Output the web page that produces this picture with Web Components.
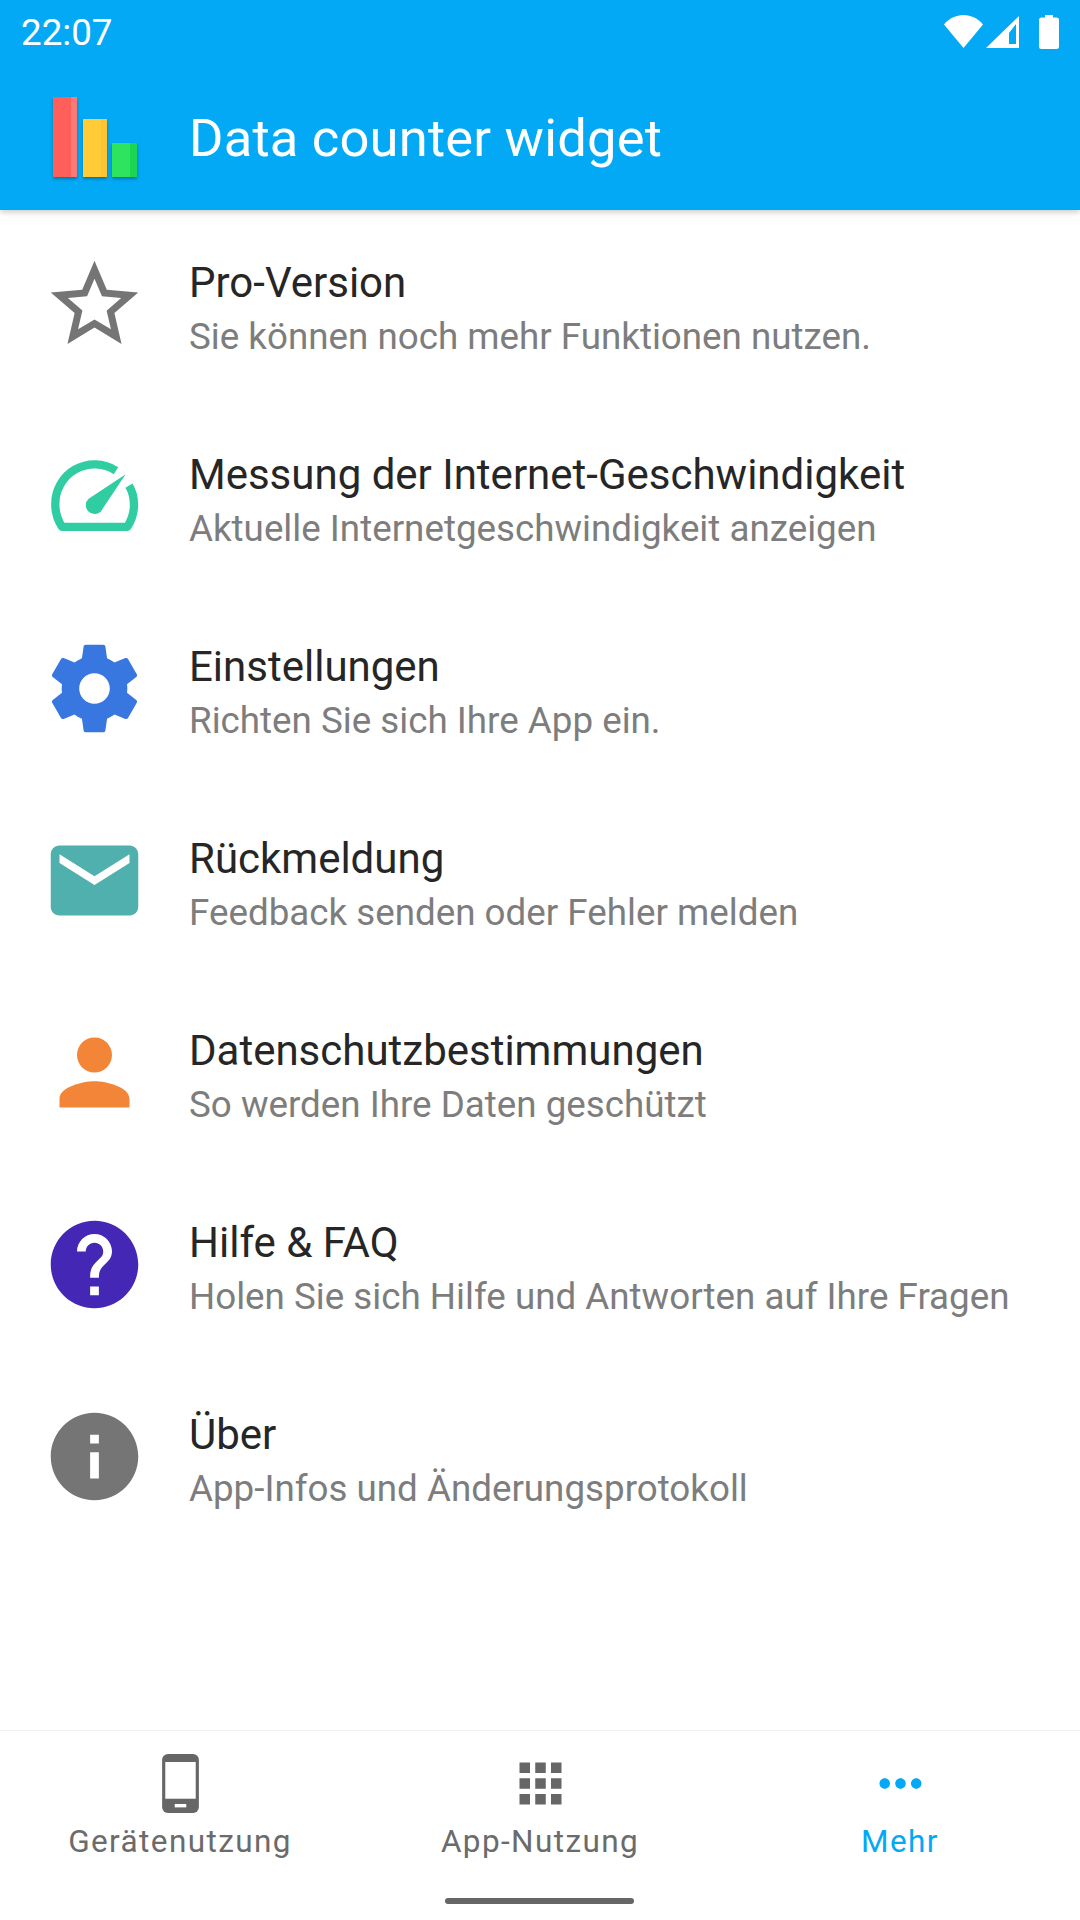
<!DOCTYPE html>
<html>
<head>
<meta charset="utf-8">
<style>
  html, body { margin: 0; padding: 0; background: #fff; }
  body { width: 1080px; height: 1920px; font-family: Roboto, sans-serif; display: flex; flex-direction: column; }
  app-list { flex: 1; }
</style>
</head>
<body>
<app-header title="Data counter widget" time="22:07"></app-header>
<app-list>
  <menu-row title="Pro-Version" text="Sie können noch mehr Funktionen nutzen.">
    <svg viewBox="0 0 24 24" fill="#757575"><path d="M22 9.24l-7.19-.62L12 2 9.19 8.63 2 9.24l5.46 4.73L5.82 21 12 17.27 18.18 21l-1.63-7.03L22 9.24zM12 15.4l-3.76 2.27 1-4.28-3.32-2.88 4.38-.38L12 6.1l1.71 4.04 4.38.38-3.32 2.88 1 4.28L12 15.4z"/></svg>
  </menu-row>
  <menu-row title="Messung der Internet-Geschwindigkeit" text="Aktuelle Internetgeschwindigkeit anzeigen">
    <svg viewBox="35 612 315 315"><path d="M257 692A118 118 0 0 0 75 795C75 818 82 840 95 860.500L291 860.500C304 840 311 818 311 795C311 773 306 754 296 737" fill="none" stroke="#30cda2" stroke-width="25" stroke-linejoin="round"/><path d="M286 703L175 776A25 25 0 0 0 211 815Z" fill="#30cda2"/></svg>
  </menu-row>
  <menu-row title="Einstellungen" text="Richten Sie sich Ihre App ein.">
    <svg viewBox="0 0 24 24" fill="#3876e0"><path d="M19.43 12.98c.04-.32.07-.64.07-.98s-.03-.66-.07-.98l2.11-1.65c.19-.15.24-.42.12-.64l-2-3.46c-.12-.22-.39-.3-.61-.22l-2.49 1c-.52-.4-1.08-.73-1.69-.98l-.38-2.65C14.46 2.18 14.25 2 14 2h-4c-.25 0-.46.18-.49.42l-.38 2.65c-.61.25-1.17.59-1.69.98l-2.49-1c-.23-.09-.49 0-.61.22l-2 3.46c-.13.22-.07.49.12.64l2.11 1.65c-.04.32-.07.65-.07.98s.03.66.07.98l-2.11 1.65c-.19.15-.24.42-.12.64l2 3.46c.12.22.39.3.61.22l2.49-1c.52.4 1.08.73 1.69.98l.38 2.65c.03.24.24.42.49.42h4c.25 0 .46-.18.49-.42l.38-2.65c.61-.25 1.17-.59 1.69-.98l2.49 1c.23.09.49 0 .61-.22l2-3.46c.12-.22.07-.49-.12-.64l-2.11-1.65zM12 15.500c-1.930 0-3.500-1.570-3.500-3.500s1.570-3.500 3.500-3.500 3.500 1.570 3.500 3.500-1.570 3.500-3.500 3.500z"/></svg>
  </menu-row>
  <menu-row title="Rückmeldung" text="Feedback senden oder Fehler melden">
    <svg viewBox="0 0 24 24" fill="#4fb0ae"><path d="M20 4H4c-1.100 0-2 .9-2 2v12c0 1.100.9 2 2 2h16c1.100 0 2-.9 2-2V6c0-1.100-.9-2-2-2zm0 4l-8 5-8-5V6l8 5 8-5v2z"/></svg>
  </menu-row>
  <menu-row title="Datenschutzbestimmungen" text="So werden Ihre Daten geschützt">
    <svg viewBox="0 0 24 24" fill="#f28537"><path d="M12 12c2.210 0 4-1.790 4-4s-1.790-4-4-4-4 1.790-4 4 1.790 4 4 4zm0 2c-2.670 0-8 1.340-8 4v2h16v-2c0-2.660-5.330-4-8-4z"/></svg>
  </menu-row>
  <menu-row title="Hilfe &amp; FAQ" text="Holen Sie sich Hilfe und Antworten auf Ihre Fragen">
    <svg viewBox="0 0 24 24" fill="#4527b5"><path d="M12 2C6.480 2 2 6.480 2 12s4.480 10 10 10 10-4.480 10-10S17.520 2 12 2zm1 17h-2v-2h2v2zm2.070-7.750l-.9.920C13.450 12.900 13 13.500 13 15h-2v-.5c0-1.100.450-2.100 1.170-2.830l1.240-1.260c.370-.360.590-.860.590-1.410 0-1.100-.9-2-2-2s-2 .9-2 2H8c0-2.210 1.790-4 4-4s4 1.790 4 4c0 .880-.360 1.680-.930 2.250z"/></svg>
  </menu-row>
  <menu-row title="Über" text="App-Infos und Änderungsprotokoll">
    <svg viewBox="0 0 24 24" fill="#757575"><path d="M12 2C6.480 2 2 6.480 2 12s4.480 10 10 10 10-4.480 10-10S17.520 2 12 2zm1 15h-2v-6h2v6zm0-8h-2V7h2v2z"/></svg>
  </menu-row>
</app-list>
<bottom-nav>
  <nav-tab label="Gerätenutzung">
    <svg viewBox="0 0 24 24"><rect x="5" y=".8" width="14" height="22.400" rx="2.200" fill="#666"/><rect x="6.200" y="3.800" width="11.600" height="14" fill="#fff"/><rect x="9.800" y="19.800" width="4.400" height="1.300" fill="#fff"/></svg>
  </nav-tab>
  <nav-tab label="App-Nutzung">
    <svg viewBox="0 0 24 24" fill="#666"><path d="M4 8h4V4H4v4zm6 12h4v-4h-4v4zm-6 0h4v-4H4v4zm0-6h4v-4H4v4zm6 0h4v-4h-4v4zm6-10v4h4V4h-4zm-6 4h4V4h-4v4zm6 6h4v-4h-4v4zm0 6h4v-4h-4v4z"/></svg>
  </nav-tab>
  <nav-tab label="Mehr" active>
    <svg viewBox="0 0 24 24" fill="#03a9f4"><path d="M6 10c-1.100 0-2 .9-2 2s.9 2 2 2 2-.9 2-2-.9-2-2-2zm12 0c-1.100 0-2 .9-2 2s.9 2 2 2 2-.9 2-2-.9-2-2-2zm-6 0c-1.100 0-2 .9-2 2s.9 2 2 2 2-.9 2-2-.9-2-2-2z"/></svg>
  </nav-tab>
</bottom-nav>
<script>
class AppHeader extends HTMLElement {
  constructor() {
    super();
    this.attachShadow({ mode: "open" });
  }
  connectedCallback() {
    this.shadowRoot.innerHTML = `
    <style>
      :host { display: block; background: #03a9f4; color: #fff; height: 210px; box-shadow: 0 2px 6px rgba(0,0,0,.22); position: relative; z-index: 1; }
      .status { height: 63px; display: flex; align-items: center; justify-content: space-between; padding: 0 21px; }
      .time { font-size: 36.750px; padding-top: 2px; }
      .icons { display: flex; align-items: center; height: 34px; }
      .icons svg { display: block; height: 34px; }
      .bar { height: 147px; display: flex; align-items: center; }
      .logo { width: 105px; margin-left: 42px; margin-right: 42px; height: 105px; display: flex; align-items: flex-end; box-sizing: border-box; padding: 0 0 12px 11px; }
      .logo i { display: block; width: 24px; box-shadow: 0 2px 3px rgba(0,0,0,.3); }
      .red { height: 80px; margin-right: 6px; background: linear-gradient(90deg, #fe5f5b 75%, #fb7a78 75%); }
      .yellow { height: 58px; margin-right: 5px; background: linear-gradient(90deg, #ffcb36 75%, #fac435 75%); }
      .logo .green { width: 25px; height: 34px; background: linear-gradient(90deg, #2ee45f 70%, #1cd652 70%); }
      .title { font-size: 52.500px; letter-spacing: .2px; padding-top: 2px; }
    </style>
    <div class="status">
      <span class="time">${this.getAttribute("time")}</span>
      <span class="icons">
        <svg width="40" viewBox="0 0 40 34" fill="#fff" style="margin-right:2px"><path d="M0 9.500C5 3.500 12 0 19.500 0S34 3.500 39 9.500L19.500 33Z"/></svg>
        <svg width="34" viewBox="0 0 34 34" fill="#fff" style="margin-right:19px"><path fill-rule="evenodd" d="M33 1V33H0ZM30 9 23 18V29H30Z"/></svg>
        <svg width="20" viewBox="0 0 20 34" fill="#fff"><path d="M6 0H14V2.500H17.500A2.500 2.500 0 0 1 20 5V31.500A2.500 2.500 0 0 1 17.500 34H2.500A2.500 2.500 0 0 1 0 31.500V5A2.500 2.500 0 0 1 2.500 2.500H6Z"/></svg>
      </span>
    </div>
    <div class="bar">
      <div class="logo"><i class="red"></i><i class="yellow"></i><i class="green"></i></div>
      <div class="title">${this.getAttribute("title")}</div>
    </div>`;
  }
}
customElements.define("app-header", AppHeader);

class AppList extends HTMLElement {
  constructor() {
    super();
    this.attachShadow({ mode: "open" });
    this.shadowRoot.innerHTML = `
    <style>:host { display: block; }</style>
    <slot></slot>`;
  }
}
customElements.define("app-list", AppList);

class MenuRow extends HTMLElement {
  constructor() {
    super();
    this.attachShadow({ mode: "open" });
  }
  connectedCallback() {
    this.shadowRoot.innerHTML = `
    <style>
      :host { display: flex; height: 192px; box-sizing: border-box; padding: 42px 0 0 42px; }
      .icon { width: 105px; height: 105px; margin-right: 42px; flex: none; }
      ::slotted(svg) { display: block; width: 105px; height: 105px; }
      .text { display: flex; flex-direction: column; padding-top: 6px; }
      .t { font-size: 42px; line-height: 50px; color: #262626; }
      .s { font-size: 36.750px; line-height: 50px; margin-top: 4px; color: #7d7d7d; }
    </style>
    <div class="icon"><slot></slot></div>
    <div class="text">
      <div class="t">${this.getAttribute("title").replace("&", "&amp;")}</div>
      <div class="s">${this.getAttribute("text")}</div>
    </div>`;
  }
}
customElements.define("menu-row", MenuRow);

class BottomNav extends HTMLElement {
  constructor() {
    super();
    this.attachShadow({ mode: "open" });
    this.shadowRoot.innerHTML = `
    <style>
      :host { display: block; border-top: 1px solid #f0f0f0; }
      .tabs { display: grid; grid-template-columns: repeat(3, 360px); height: 146px; }
      .gesture { height: 43px; display: flex; justify-content: center; padding-top: 21px; box-sizing: border-box; }
      .gesture i { display: block; width: 189px; height: 6px; margin-right: 2px; border-radius: 3px; background: #666; }
    </style>
    <div class="tabs"><slot></slot></div>
    <div class="gesture"><i></i></div>`;
  }
}
customElements.define("bottom-nav", BottomNav);

class NavTab extends HTMLElement {
  constructor() {
    super();
    this.attachShadow({ mode: "open" });
  }
  connectedCallback() {
    this.shadowRoot.innerHTML = `
    <style>
      :host { display: flex; flex-direction: column; align-items: center; padding-top: 21px; color: ${this.hasAttribute("active") ? "#03a9f4" : "#6b6b6b"}; }
      ::slotted(svg) { display: block; width: 63px; height: 63px; }
      .l { font-size: 31.500px; line-height: 40px; letter-spacing: 1.400px; margin-top: 7px; }
    </style>
    <slot></slot>
    <div class="l">${this.getAttribute("label")}</div>`;
  }
}
customElements.define("nav-tab", NavTab);
</script>
</body>
</html>
